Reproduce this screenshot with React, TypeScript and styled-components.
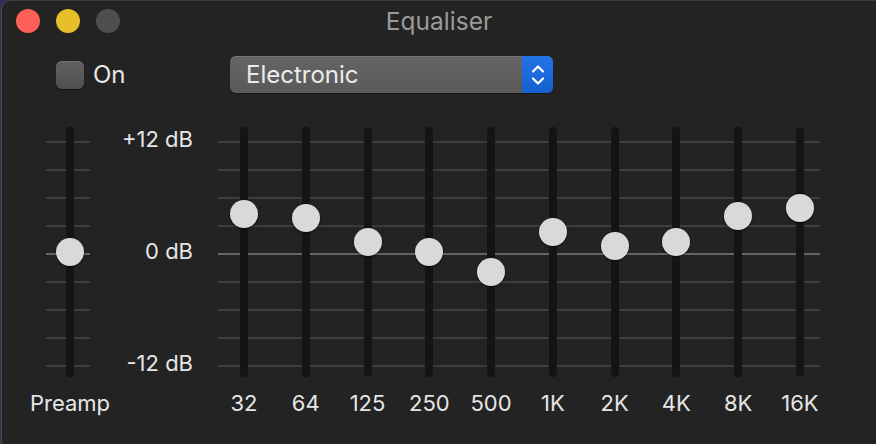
import React from "react";
import styled, { createGlobalStyle } from "styled-components";

const Global = createGlobalStyle`
  html, body { margin: 0; padding: 0; background: #3a2c55; }
  body { font-family: Inter, "Liberation Sans", sans-serif; -webkit-font-smoothing: antialiased; }
  #root { width: 876px; height: 444px; overflow: hidden; }
`;

const Window = styled.div`
  box-sizing: border-box;
  width: 875px;
  height: 444px;
  margin-left: 1px;
  background: #232323;
  border-left: 1px solid #4a4a4a;
  border-top: 1px solid #3c3c3c;
  border-top-left-radius: 10px;
  display: flex;
  flex-direction: column;
`;

const TitleBar = styled.div`
  height: 39px;
  display: grid;
  grid-template-columns: 1fr auto 1fr;
  align-items: center;
`;

const Lights = styled.div`
  display: flex;
  gap: 16px;
  padding-left: 14px;
`;

const Light = styled.span<{ $color: string }>`
  width: 24px;
  height: 24px;
  border-radius: 50%;
  background: ${(p) => p.$color};
`;

const Title = styled.div`
  font-size: 24.5px;
  line-height: 28px;
  padding-top: 1px;
  color: #9a9a9a;
`;

const Controls = styled.div`
  margin-top: 16px;
  height: 37px;
  padding-left: 54px;
  display: grid;
  grid-template-columns: 174px 323px;
  align-items: center;
`;

const Toggle = styled.label`
  display: flex;
  align-items: center;
  gap: 9px;
  font-size: 24px;
  color: #e8e8e8;
`;

const CheckBox = styled.span`
  box-sizing: border-box;
  width: 28px;
  height: 28px;
  border-radius: 6px;
  background: linear-gradient(#616161, #4f4f4f);
  box-shadow: inset 0 1px 0 rgba(255, 255, 255, 0.12), 0 1px 1px rgba(0, 0, 0, 0.4);
`;

const Select = styled.div`
  height: 37px;
  display: flex;
  border-radius: 6px;
  overflow: hidden;
  background: linear-gradient(#646464, #5a5a5a);
  box-shadow: inset 0 1px 0 rgba(255, 255, 255, 0.12), 0 1px 1px rgba(0, 0, 0, 0.4);
`;

const SelectText = styled.div`
  flex: 1;
  display: flex;
  align-items: center;
  padding-left: 16px;
  font-size: 24px;
  color: #ececec;
`;

const SelectArrows = styled.div`
  width: 31px;
  display: flex;
  align-items: center;
  justify-content: center;
  background: linear-gradient(#2474e8, #155fce);
`;

const EqRow = styled.div`
  margin-top: 34px;
  padding-left: 44px;
  display: flex;
  align-items: flex-start;
`;

const Lines = styled.div<{ $width: number; $padLeft: number }>`
  width: ${(p) => p.$width}px;
  box-sizing: border-box;
  padding-left: ${(p) => p.$padLeft}px;
  display: flex;
  gap: 53.78px;
  background:
    linear-gradient(#646464, #646464) 0 126px / 100% 2px no-repeat,
    repeating-linear-gradient(to bottom, #3d3d3d 0 2px, transparent 2px 28px) 0 14px / 100% 226px no-repeat;
`;

const Band = styled.div`
  width: 8px;
  display: flex;
  flex-direction: column;
  align-items: center;
`;

const Track = styled.div`
  position: relative;
  width: 8px;
  height: 250px;
  border-radius: 4px;
  background: #141414;
`;

const Knob = styled.div`
  position: absolute;
  left: -10px;
  width: 28px;
  height: 28px;
  border-radius: 50%;
  background: #d9d9d9;
  box-shadow: 0 1px 2px rgba(0, 0, 0, 0.6);
`;

const BandLabel = styled.div`
  margin-top: 15px;
  font-size: 22px;
  line-height: 22px;
  color: #e6e6e6;
  white-space: nowrap;
`;

const Scale = styled.div`
  width: 103px;
  height: 248px;
  margin-right: 25px;
  display: flex;
  flex-direction: column;
  justify-content: space-between;
  align-items: flex-end;
  font-size: 22px;
  line-height: 24px;
  color: #e6e6e6;
`;

const PX_PER_DB = 112 / 12;

const bands: [string, number][] = [
  ["32", 4.29],
  ["64", 3.86],
  ["125", 1.29],
  ["250", 0.21],
  ["500", -1.93],
  ["1K", 2.36],
  ["2K", 0.86],
  ["4K", 1.29],
  ["8K", 4.07],
  ["16K", 4.93],
];

function Slider({ label, db }: { label: string; db: number }) {
  const center = 127 - db * PX_PER_DB;
  return (
    <Band>
      <Track>
        <Knob style={{ top: center - 14 }} />
      </Track>
      <BandLabel>{label}</BandLabel>
    </Band>
  );
}

export default function App() {
  return (
    <>
      <Global />
      <Window>
        <TitleBar>
          <Lights>
            <Light $color="#fe5f57" />
            <Light $color="#e6bf2a" />
            <Light $color="#4e4e4e" />
          </Lights>
          <Title>Equaliser</Title>
          <div />
        </TitleBar>
        <Controls>
          <Toggle>
            <CheckBox />
            On
          </Toggle>
          <Select>
            <SelectText>Electronic</SelectText>
            <SelectArrows>
              <svg width="16" height="26" viewBox="0 0 16 26" fill="none" stroke="#fff" strokeWidth="2.2" strokeLinecap="round" strokeLinejoin="round">
                <path d="M3 9.5 L8 4.5 L13 9.5" />
                <path d="M3 16.5 L8 21.5 L13 16.5" />
              </svg>
            </SelectArrows>
          </Select>
        </Controls>
        <EqRow>
          <Lines $width={44} $padLeft={20}>
            <Slider label="Preamp" db={0.21} />
          </Lines>
          <Scale>
            <span>+12 dB</span>
            <span>0 dB</span>
            <span>-12 dB</span>
          </Scale>
          <Lines $width={602} $padLeft={22}>
            {bands.map(([l, d]) => (
              <Slider key={l} label={l} db={d} />
            ))}
          </Lines>
        </EqRow>
      </Window>
    </>
  );
}
